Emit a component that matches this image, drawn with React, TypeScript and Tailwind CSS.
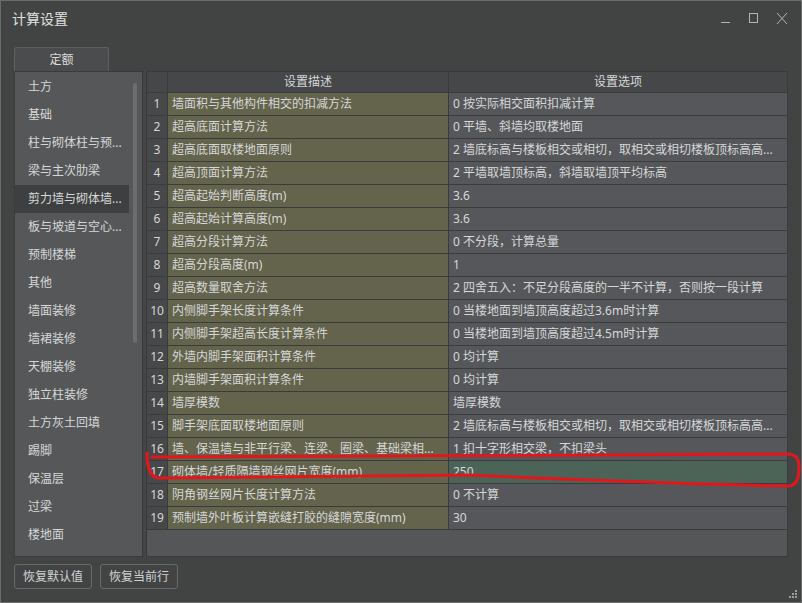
import React from "react";

const rows: [string, string][] = [
  ["墙面积与其他构件相交的扣减方法", "0 按实际相交面积扣减计算"],
  ["超高底面计算方法", "0 平墙、斜墙均取楼地面"],
  ["超高底面取楼地面原则", "2 墙底标高与楼板相交或相切，取相交或相切楼板顶标高高..."],
  ["超高顶面计算方法", "2 平墙取墙顶标高，斜墙取墙顶平均标高"],
  ["超高起始判断高度(m)", "3.6"],
  ["超高起始计算高度(m)", "3.6"],
  ["超高分段计算方法", "0 不分段，计算总量"],
  ["超高分段高度(m)", "1"],
  ["超高数量取舍方法", "2 四舍五入：不足分段高度的一半不计算，否则按一段计算"],
  ["内侧脚手架长度计算条件", "0 当楼地面到墙顶高度超过3.6m时计算"],
  ["内侧脚手架超高长度计算条件", "0 当楼地面到墙顶高度超过4.5m时计算"],
  ["外墙内脚手架面积计算条件", "0 均计算"],
  ["内墙脚手架面积计算条件", "0 均计算"],
  ["墙厚模数", "墙厚模数"],
  ["脚手架底面取楼地面原则", "2 墙底标高与楼板相交或相切，取相交或相切楼板顶标高高..."],
  ["墙、保温墙与非平行梁、连梁、圈梁、基础梁相...", "1 扣十字形相交梁，不扣梁头"],
  ["砌体墙/轻质隔墙钢丝网片宽度(mm)", "250"],
  ["阴角钢丝网片长度计算方法", "0 不计算"],
  ["预制墙外叶板计算嵌缝打胶的缝隙宽度(mm)", "30"],
];

const side = [
  "土方",
  "基础",
  "柱与砌体柱与预...",
  "梁与主次肋梁",
  "剪力墙与砌体墙...",
  "板与坡道与空心...",
  "预制楼梯",
  "其他",
  "墙面装修",
  "墙裙装修",
  "天棚装修",
  "独立柱装修",
  "土方灰土回填",
  "踢脚",
  "保温层",
  "过梁",
  "楼地面",
];

export default function App() {
  return (
    <div className="relative w-[802px] h-[603px] bg-[#424443] border border-[#6b6c6c] flex flex-col font-['Noto_Sans','Noto_Sans_CJK_SC',sans-serif] text-[12px] text-[#d5d7d9] overflow-hidden">
      {/* title bar */}
      <div className="h-[35px] flex items-center pl-[11px] pr-[13px] shrink-0">
        <span className="text-[14px] leading-none text-[#e0e0e0]">计算设置</span>
        <svg className="ml-auto" width="68" height="12" viewBox="0 0 68 12" fill="none" stroke="#b4b4b4" strokeWidth="1">
          <line x1="1" y1="9.5" x2="10" y2="9.5" />
          <rect x="29.5" y="0.5" width="8" height="9" />
          <line x1="57" y1="0" x2="67" y2="11" />
          <line x1="67" y1="0" x2="57" y2="11" />
        </svg>
      </div>

      <div className="px-[13px] flex flex-col">
        {/* tab */}
        <div className="mt-[11px] flex">
          <div className="w-[95px] h-[24px] flex items-center justify-center bg-[#4b4c4d] border border-b-0 border-[#5e5f60] rounded-t-[3px] text-[#dcdcdc] leading-none">
            定额
          </div>
        </div>

        {/* frame */}
        <div className="h-[486px] flex">
          {/* list */}
          <div className="w-[128px] flex bg-[#565758] border-l border-t border-b border-[#3a3b3c]">
            <div className="w-[114px] flex flex-col pt-[1px]">
              {side.map((s, i) => (
                <div
                  key={i}
                  className={
                    "h-[28px] shrink-0 flex items-center pl-[13px] whitespace-nowrap leading-none " +
                    (i === 4 ? "bg-[#3e3f40]" : "")
                  }
                >
                  {s}
                </div>
              ))}
            </div>
            <div className="w-[13px] pt-[11px] pl-[4px]">
              <div className="w-[4px] h-[260px] rounded-full bg-[#6c6d6e]" />
            </div>
          </div>
          {/* splitter */}
          <div className="w-[5px] bg-[#454647] border-x border-[#37383a]" />
          {/* table */}
          <div className="flex-1 flex flex-col bg-[#555658] border-t border-b border-r border-[#3a3b3c]">
            <div className="flex h-[21px] bg-[#464748] border-b border-[#3a3b3c] shrink-0">
              <div className="w-[21px] border-r border-[#3a3b3c]" />
              <div className="w-[281px] border-r border-[#3a3b3c] flex items-center justify-center leading-none">设置描述</div>
              <div className="flex-1 flex items-center justify-center leading-none">设置选项</div>
            </div>
            {rows.map(([d, o], i) => (
              <div key={i} className="flex h-[23px] border-b border-[#3a3b3c] shrink-0">
                <div className="w-[21px] border-r border-[#3a3b3c] bg-[#47484a] flex items-center justify-center leading-none">
                  {i + 1}
                </div>
                <div className="w-[281px] border-r border-[#3a3b3c] bg-[#64634b] flex items-center pl-[4px] whitespace-nowrap overflow-hidden leading-none">
                  {d}
                </div>
                <div
                  className={
                    "flex-1 flex items-center pl-[4px] whitespace-nowrap overflow-hidden leading-none " +
                    (i === 16 ? "bg-[#4b6457]" : "bg-[#56575a]")
                  }
                >
                  {o}
                </div>
              </div>
            ))}
          </div>
        </div>

        {/* buttons */}
        <div className="mt-[7px] flex gap-[8px]">
          <div className="w-[78px] h-[25px] flex items-center justify-center border border-[#67686a] rounded-[3px] text-[#d0d2d4] leading-none">
            恢复默认值
          </div>
          <div className="w-[78px] h-[25px] flex items-center justify-center border border-[#67686a] rounded-[3px] text-[#d0d2d4] leading-none">
            恢复当前行
          </div>
        </div>
      </div>

      {/* resize grip */}
      <svg className="absolute right-[3px] bottom-[3px]" width="9" height="9" viewBox="0 0 9 9" fill="#9c9c9c">
        <rect x="6" y="0" width="2" height="2" />
        <rect x="3" y="3" width="2" height="2" />
        <rect x="6" y="3" width="2" height="2" />
        <rect x="0" y="6" width="2" height="2" />
        <rect x="3" y="6" width="2" height="2" />
        <rect x="6" y="6" width="2" height="2" />
      </svg>

      {/* red annotation */}
      <svg className="absolute left-[-1px] top-[-1px] pointer-events-none" width="802" height="603" viewBox="0 0 802 603" fill="none">
        <path
          d="M147,453 C147,466 149,476 158,478 L470,475 C560,479 700,484 788,486 C797,486 799,478 799,468 C799,458 796,454 787,454 L600,455 L152,457"
          stroke="#e3161c"
          strokeWidth="3"
          strokeLinecap="round"
          strokeLinejoin="round"
        />
      </svg>
    </div>
  );
}
